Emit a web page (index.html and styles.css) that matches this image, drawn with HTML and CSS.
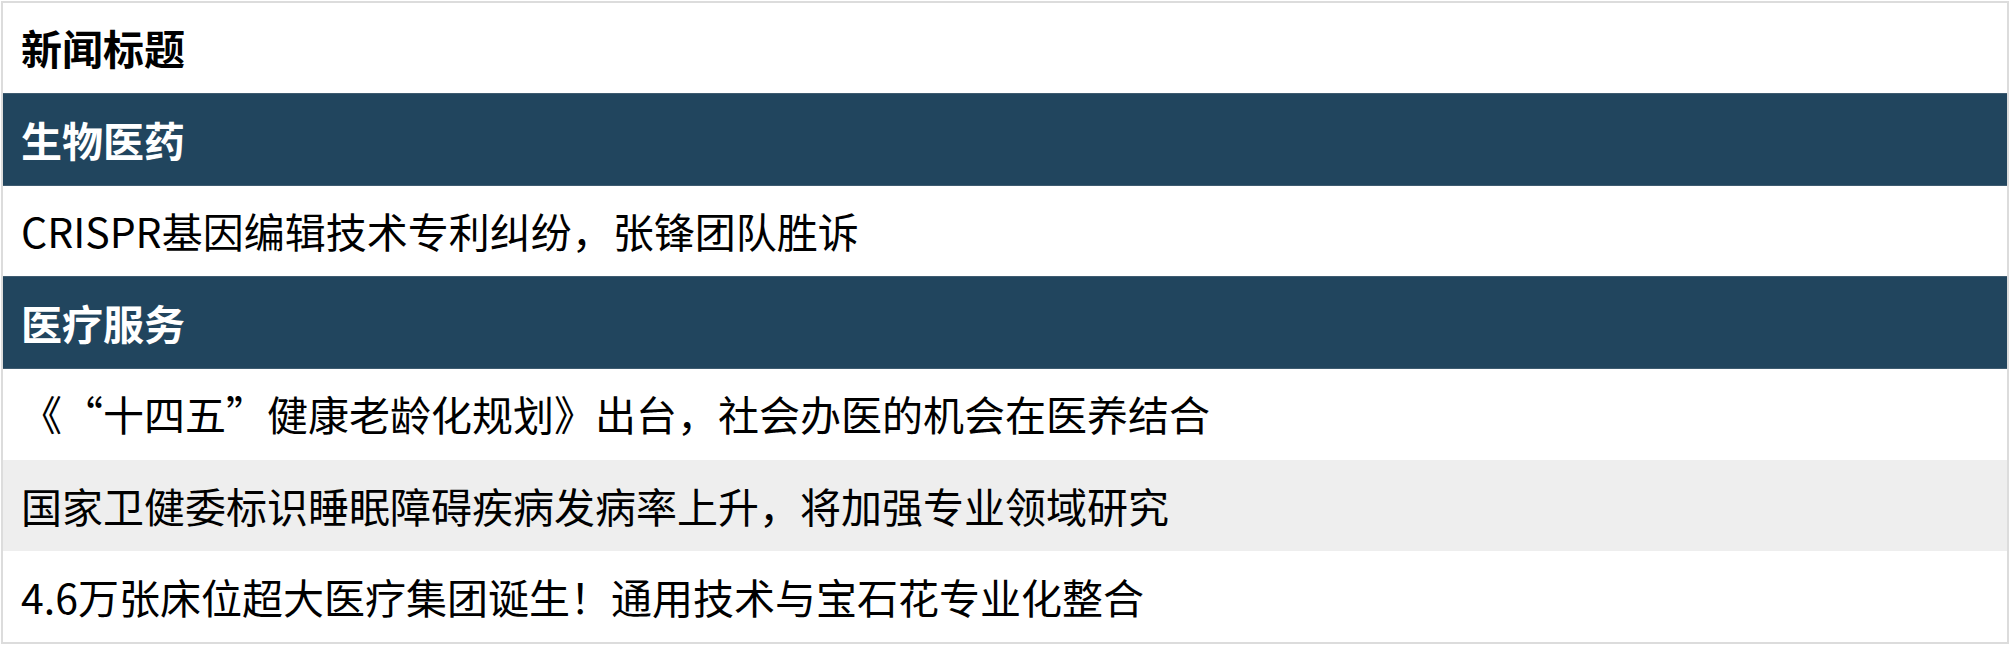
FILE: index.html
```html
<!DOCTYPE html>
<html lang="zh-CN">
<head>
<meta charset="utf-8">
<title>新闻标题</title>
<link rel="stylesheet" href="styles.css">
</head>
<body>
<table class="news">
  <thead>
    <tr><th class="head">新闻标题</th></tr>
  </thead>
  <tbody>
    <tr class="cat"><td>生物医药</td></tr>
    <tr><td>CRISPR基因编辑技术专利纠纷，张锋团队胜诉</td></tr>
    <tr class="cat"><td>医疗服务</td></tr>
    <tr><td>《“十四五”健康老龄化规划》出台，社会办医的机会在医养结合</td></tr>
    <tr class="alt"><td>国家卫健委标识睡眠障碍疾病发病率上升，将加强专业领域研究</td></tr>
    <tr><td>4.6万张床位超大医疗集团诞生！通用技术与宝石花专业化整合</td></tr>
  </tbody>
</table>
</body>
</html>
```
FILE: styles.css
```css
html, body {
  margin: 0;
  padding: 0;
  background: #ffffff;
}

.news {
  width: calc(100% - 2px);
  margin: 1px;
  border-collapse: collapse;
  border: 2px solid #dcdcdc;
  font-family: "Noto Sans CJK SC", "Noto Sans", sans-serif;
  font-size: 41px;
  color: #000;
  text-spacing-trim: space-all;
}

.news th,
.news td {
  height: 91.5px;
  padding: 0 18px;
  text-align: left;
  vertical-align: middle;
  line-height: 1.2;
  box-sizing: border-box;
}

.news .head {
  font-weight: 700;
}

.news .cat td {
  background: #21455e;
  color: #ffffff;
  font-weight: 700;
  border-top: 1px solid #3e5b70;
  border-bottom: 1px solid #3e5b70;
}

.news .alt td {
  background: #eeeeee;
}
```
